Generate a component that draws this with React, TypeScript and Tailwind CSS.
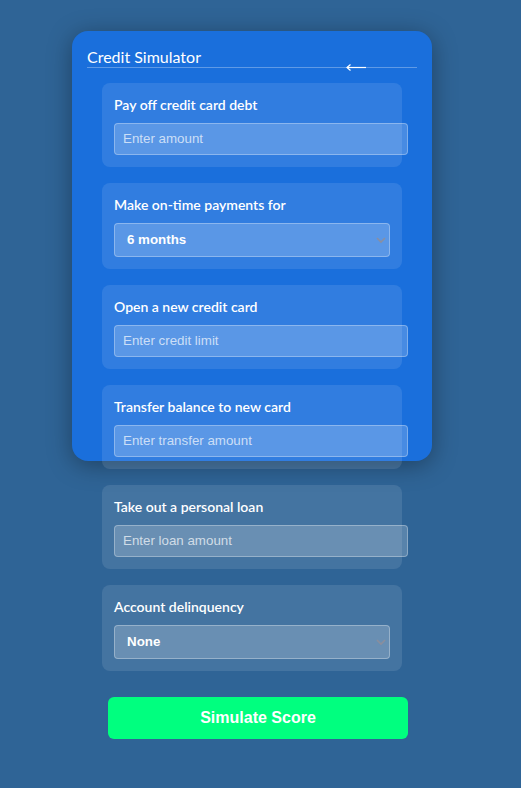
import React from "react";

const inputCls =
  "box-content w-full h-[14px] px-[8px] py-[8px] rounded-[4px] border border-white/30 bg-white/20 text-white text-[13.333px] leading-[14px] placeholder:text-white/70 outline-none";

function Section({ label, children }: { label: string; children: React.ReactNode }) {
  return (
    <div className="mx-[15px] rounded-[8px] bg-white/10 p-[12px]">
      <div className="mb-[8px] text-[14px] leading-[20px] font-semibold text-white" style={{ fontFamily: "Lato, 'Noto Sans', sans-serif" }}>
        {label}
      </div>
      {children}
    </div>
  );
}

function TextInput({ placeholder }: { placeholder: string }) {
  return (
    <input
      type="text"
      placeholder={placeholder}
      className={inputCls}
      style={{ fontFamily: "'Liberation Sans', Arial, sans-serif" }}
    />
  );
}

function Select({ value }: { value: string }) {
  return (
    <div className="relative w-full">
      <div
        className="flex h-[34px] w-full items-center rounded-[4px] border border-white/30 bg-white/20 pl-[12px] text-[13.333px] font-bold text-white"
        style={{ fontFamily: "'Liberation Sans', Arial, sans-serif" }}
      >
        {value}
      </div>
      <svg
        className="absolute right-[4px] top-[13px]"
        width="10"
        height="8"
        viewBox="0 0 10 8"
        fill="none"
      >
        <path d="M1 2 L5 6 L9 2" stroke="#8e8e9a" strokeWidth="1.6" strokeOpacity="0.9" />
      </svg>
    </div>
  );
}

export default function App() {
  return (
    <div className="min-h-[788px] w-full bg-[#2f6496] pl-[72px] pt-[31px]">
      <div className="h-[430px] w-[360px] rounded-[16px] bg-[#1a6fdc] p-[15px] shadow-[0_4px_24px_rgba(0,0,0,0.35)]">
        <div className="flex h-[22px] items-end justify-between border-b border-white/30">
          <div
            className="text-[16px] leading-[21px] text-white"
            style={{ fontFamily: "Lato, 'Noto Sans', sans-serif" }}
          >
            Credit Simulator
          </div>
          <svg
            className="mb-[-4px] mr-[51px]"
            width="20"
            height="7"
            viewBox="0 0 20 7"
            fill="none"
          >
            <path d="M1 3.5 H20" stroke="white" strokeWidth="1.2" />
            <path d="M4.5 0.5 L1 3.5 L4.5 6.5" stroke="white" strokeWidth="1.2" />
          </svg>
        </div>
        <div className="mt-[15px] flex flex-col gap-[16px]">
          <Section label="Pay off credit card debt">
            <TextInput placeholder="Enter amount" />
          </Section>
          <Section label="Make on-time payments for">
            <Select value="6 months" />
          </Section>
          <Section label="Open a new credit card">
            <TextInput placeholder="Enter credit limit" />
          </Section>
          <Section label="Transfer balance to new card">
            <TextInput placeholder="Enter transfer amount" />
          </Section>
          <Section label="Take out a personal loan">
            <TextInput placeholder="Enter loan amount" />
          </Section>
          <Section label="Account delinquency">
            <Select value="None" />
          </Section>
          <button
            className="ml-[21px] mt-[10px] h-[42px] w-[300px] rounded-[6px] bg-[#00ff7f] text-[16px] font-bold text-white"
            style={{ fontFamily: "'Liberation Sans', Arial, sans-serif" }}
          >
            Simulate Score
          </button>
        </div>
      </div>
    </div>
  );
}
